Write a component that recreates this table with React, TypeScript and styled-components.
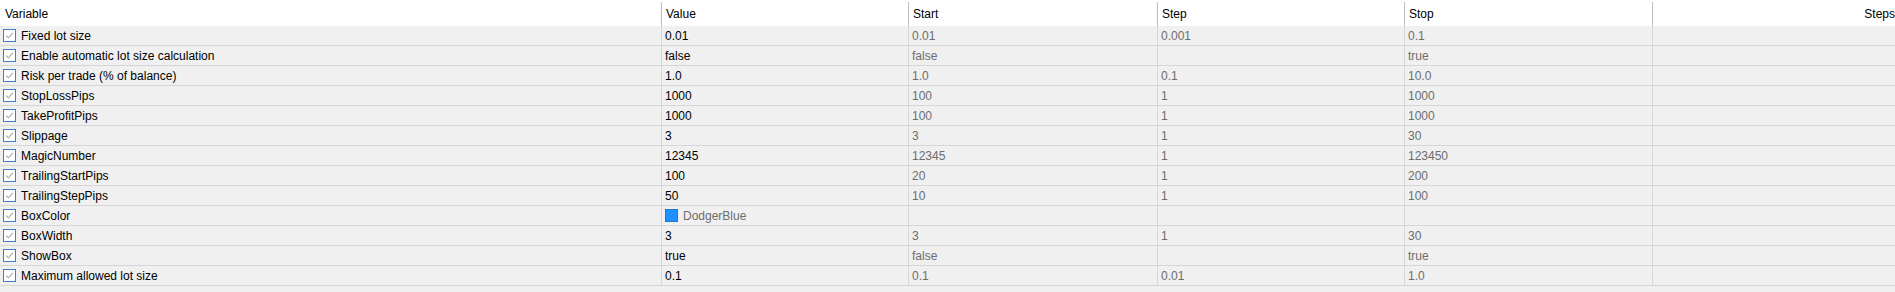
import React from "react";
import styled, {createGlobalStyle} from "styled-components";

const GlobalStyle = createGlobalStyle`
  html, body {
    margin: 0;
    padding: 0;
    background: #f0f0f0;
  }
  body {
    font-family: "Liberation Sans", Arial, sans-serif;
    font-size: 12px;
    color: #000;
  }
`;

const COLUMNS = "661px 247px 249px 247px 248px 1fr";

const Table = styled.div`
  width: 1895px;
  overflow: hidden;
`;

const HeaderRow = styled.div`
  display: grid;
  grid-template-columns: ${COLUMNS};
  height: 26px;
  padding-top: 2px;
  box-sizing: border-box;
  background: #ffffff;
`;

const HeaderCell = styled.div<{ $first?: boolean; $right?: boolean }>`
  display: flex;
  align-items: center;
  justify-content: ${p => (p.$right ? "flex-end" : "flex-start")};
  padding: 0 ${p => (p.$right ? "0" : "4px")} 0 ${p => (p.$first ? "5px" : "4px")};
  border-left: ${p => (p.$first ? "none" : "1px solid #bdbdbd")};
  white-space: nowrap;
  overflow: hidden;
`;

const Row = styled.div`
  display: grid;
  grid-template-columns: ${COLUMNS};
  height: 20px;
  box-sizing: border-box;
  border-bottom: 1px solid #d6d6d6;
  background: #f0f0f0;
`;

const Cell = styled.div<{ $first?: boolean; $muted?: boolean }>`
  display: flex;
  align-items: center;
  gap: 5px;
  padding-left: ${p => (p.$first ? "3px" : "3px")};
  border-left: ${p => (p.$first ? "none" : "1px solid #d6d6d6")};
  color: ${p => (p.$muted ? "#6d6d6d" : "#000")};
  white-space: nowrap;
  overflow: hidden;
`;

const Swatch = styled.span<{ $color: string }>`
  width: 11px;
  height: 11px;
  border: 1px solid #1a78d8;
  background: ${p => p.$color};
  flex: none;
`;

function CheckBox() {
    return (
        <svg width="13" height="13" viewBox="0 0 13 13" style={{flex: "none"}}>
            <rect x="0.5" y="0.5" width="12" height="12" fill="#ffffff" stroke="#3f7cc0"/>
            <path d="M3.2 6.6 L5.4 8.8 L9.8 3.9" fill="none" stroke="#a8a8a8" strokeWidth="1.1"/>
        </svg>
    );
}

type Param = {
    name: string;
    value: string;
    start: string;
    step: string;
    stop: string;
    color?: string;
}

const params: Param[] = [
    {name: "Fixed lot size", value: "0.01", start: "0.01", step: "0.001", stop: "0.1"},
    {name: "Enable automatic lot size calculation", value: "false", start: "false", step: "", stop: "true"},
    {name: "Risk per trade (% of balance)", value: "1.0", start: "1.0", step: "0.1", stop: "10.0"},
    {name: "StopLossPips", value: "1000", start: "100", step: "1", stop: "1000"},
    {name: "TakeProfitPips", value: "1000", start: "100", step: "1", stop: "1000"},
    {name: "Slippage", value: "3", start: "3", step: "1", stop: "30"},
    {name: "MagicNumber", value: "12345", start: "12345", step: "1", stop: "123450"},
    {name: "TrailingStartPips", value: "100", start: "20", step: "1", stop: "200"},
    {name: "TrailingStepPips", value: "50", start: "10", step: "1", stop: "100"},
    {name: "BoxColor", value: "DodgerBlue", start: "", step: "", stop: "", color: "#1e90ff"},
    {name: "BoxWidth", value: "3", start: "3", step: "1", stop: "30"},
    {name: "ShowBox", value: "true", start: "false", step: "", stop: "true"},
    {name: "Maximum allowed lot size", value: "0.1", start: "0.1", step: "0.01", stop: "1.0"},
];

export default function App() {
    return (
        <>
            <GlobalStyle/>
            <Table>
                <HeaderRow>
                    <HeaderCell $first>Variable</HeaderCell>
                    <HeaderCell>Value</HeaderCell>
                    <HeaderCell>Start</HeaderCell>
                    <HeaderCell>Step</HeaderCell>
                    <HeaderCell>Stop</HeaderCell>
                    <HeaderCell $right>Steps</HeaderCell>
                </HeaderRow>
                {params.map(p => (
                    <Row key={p.name}>
                        <Cell $first>
                            <CheckBox/>
                            {p.name}
                        </Cell>
                        {p.color ? (
                            <Cell $muted>
                                <Swatch $color={p.color}/>
                                {p.value}
                            </Cell>
                        ) : (
                            <Cell>{p.value}</Cell>
                        )}
                        <Cell $muted>{p.start}</Cell>
                        <Cell $muted>{p.step}</Cell>
                        <Cell $muted>{p.stop}</Cell>
                        <Cell $muted></Cell>
                    </Row>
                ))}
            </Table>
        </>
    );
}
